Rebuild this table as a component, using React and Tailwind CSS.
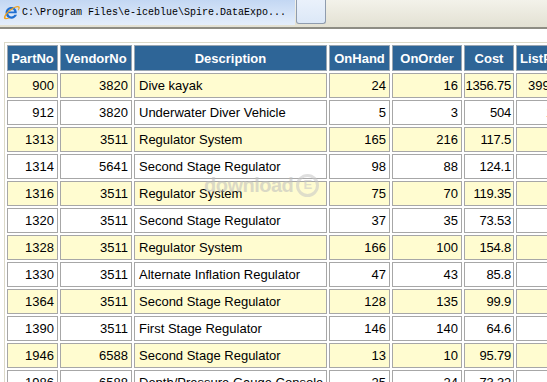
import React from "react";

const rows = [
  ["900", "3820", "Dive kayak", "24", "16", "1356.75", "3999.95"],
  ["912", "3820", "Underwater Diver Vehicle", "5", "3", "504", "1680"],
  ["1313", "3511", "Regulator System", "165", "216", "117.5", "250"],
  ["1314", "5641", "Second Stage Regulator", "98", "88", "124.1", "365"],
  ["1316", "3511", "Regulator System", "75", "70", "119.35", "341"],
  ["1320", "3511", "Second Stage Regulator", "37", "35", "73.53", "171"],
  ["1328", "3511", "Regulator System", "166", "100", "154.8", "430"],
  ["1330", "3511", "Alternate Inflation Regulator", "47", "43", "85.8", "260"],
  ["1364", "3511", "Second Stage Regulator", "128", "135", "99.9", "270"],
  ["1390", "3511", "First Stage Regulator", "146", "140", "64.6", "170"],
  ["1946", "6588", "Second Stage Regulator", "13", "10", "95.79", "290"],
  ["1986", "6588", "Depth/Pressure Gauge Console", "25", "24", "73.32", "205"],
];

const headers = ["PartNo", "VendorNo", "Description", "OnHand", "OnOrder", "Cost", "ListPrice"];
const widths = ["w-[51px]", "w-[72px]", "w-[193px]", "w-[61px]", "w-[70px]", "w-[50px]", "w-[63px]"];

const cellPad = (ci) => {
  if (ci === 2) return "pl-[4px] pr-[3px] text-left";
  if (ci === 5) return "pl-0 pr-[2px] text-right tracking-[-0.2px]";
  return "px-[3px] text-right";
};

const IeIcon = () => (
  <svg width="17" height="17" viewBox="0 0 17 17" className="shrink-0">
    {/* blue "e" ring */}
    <path
      d="M13.6 9.2H5.2c.2 2 1.6 3.2 3.3 3.2 1.3 0 2.3-.6 2.9-1.6h2.6c-.9 2.4-3.1 3.9-5.6 3.9-3.3 0-5.8-2.6-5.8-5.9S5.1 2.9 8.4 2.9c3.3 0 5.4 2.5 5.4 5.6 0 .2 0 .5-.2.7zM5.3 7.4h6c-.3-1.6-1.4-2.5-2.9-2.5S5.6 5.8 5.3 7.4z"
      fill="#1f6fd1"
    />
    {/* orange swoosh */}
    <path
      d="M1.2 14.8c-1.2-1.6 1.4-6 5.8-9.3 4.1-3.1 8.2-4.4 9.4-3 .7.8.2 2.3-1 4l-.6-.5c.7-1.1.9-2 .5-2.4-.9-1-4.2.3-7.6 2.9-3.6 2.7-5.9 6.2-5 7.3.5.5 1.7.4 3.2-.2l.5.6c-2.3 1.1-4.4 1.3-5.2.6z"
      fill="#f2a21b"
    />
  </svg>
);

export default function App() {
  return (
    <div className="w-[547px] h-[382px] overflow-hidden bg-white font-['Liberation_Sans',Arial,sans-serif]">
      {/* browser tab strip */}
      <div className="flex h-[29px] border-b-2 border-[#8e8d84] bg-gradient-to-b from-[#f3f2ea] to-[#e3e1d3]">
        <div className="flex h-[25px] w-[295px] items-center gap-[2px] pl-[3px] bg-gradient-to-b from-[#c3d7f3] to-[#e4eefb]">
          <IeIcon />
          <span className="whitespace-pre font-['Liberation_Mono',monospace] text-[10px] text-black">
            {"C:\\Program Files\\e-iceblue\\Spire.DataExpo..."}
          </span>
        </div>
        <div className="ml-[1px] h-[24px] w-[30px] rounded-b-[3px] border-x border-b border-[#8f9cae] bg-gradient-to-b from-[#eaf1fb] to-[#dce8f7]" />
      </div>

      {/* data grid */}
      <div className="relative pl-[4px] pt-[13px]">
        <table className="w-[578px] table-fixed border-separate border-spacing-[2px] border border-[#dcd9c8] text-[13px] leading-[15px] text-black">
          <thead>
            <tr>
              {headers.map((h, i) => (
                <th
                  key={h}
                  className={`${widths[i]} h-[26px] overflow-hidden whitespace-nowrap border border-[#9aa6b2] bg-[#2e6597] px-[2px] text-center font-bold text-white`}
                >
                  {h}
                </th>
              ))}
            </tr>
          </thead>
          <tbody>
            {rows.map((r, ri) => (
              <tr key={ri} className={ri % 2 === 0 ? "bg-[#fffcd0]" : "bg-white"}>
                {r.map((c, ci) => (
                  <td
                    key={ci}
                    className={`h-[25px] overflow-hidden whitespace-nowrap border border-[#a7a7a7] ${cellPad(ci)}`}
                  >
                    {c}
                  </td>
                ))}
              </tr>
            ))}
          </tbody>
        </table>

        {/* watermark overlay */}
        <div className="absolute left-[204px] top-[141px] flex items-center gap-[3px] opacity-55">
          <span className="text-[20px] font-bold tracking-tight text-[#bdbdbd]">download</span>
          <span className="flex h-[23px] w-[23px] items-center justify-center rounded-full border-[3px] border-[#c6c6c6] text-[13px] font-bold text-[#c6c6c6]">
            E
          </span>
        </div>
      </div>
    </div>
  );
}
